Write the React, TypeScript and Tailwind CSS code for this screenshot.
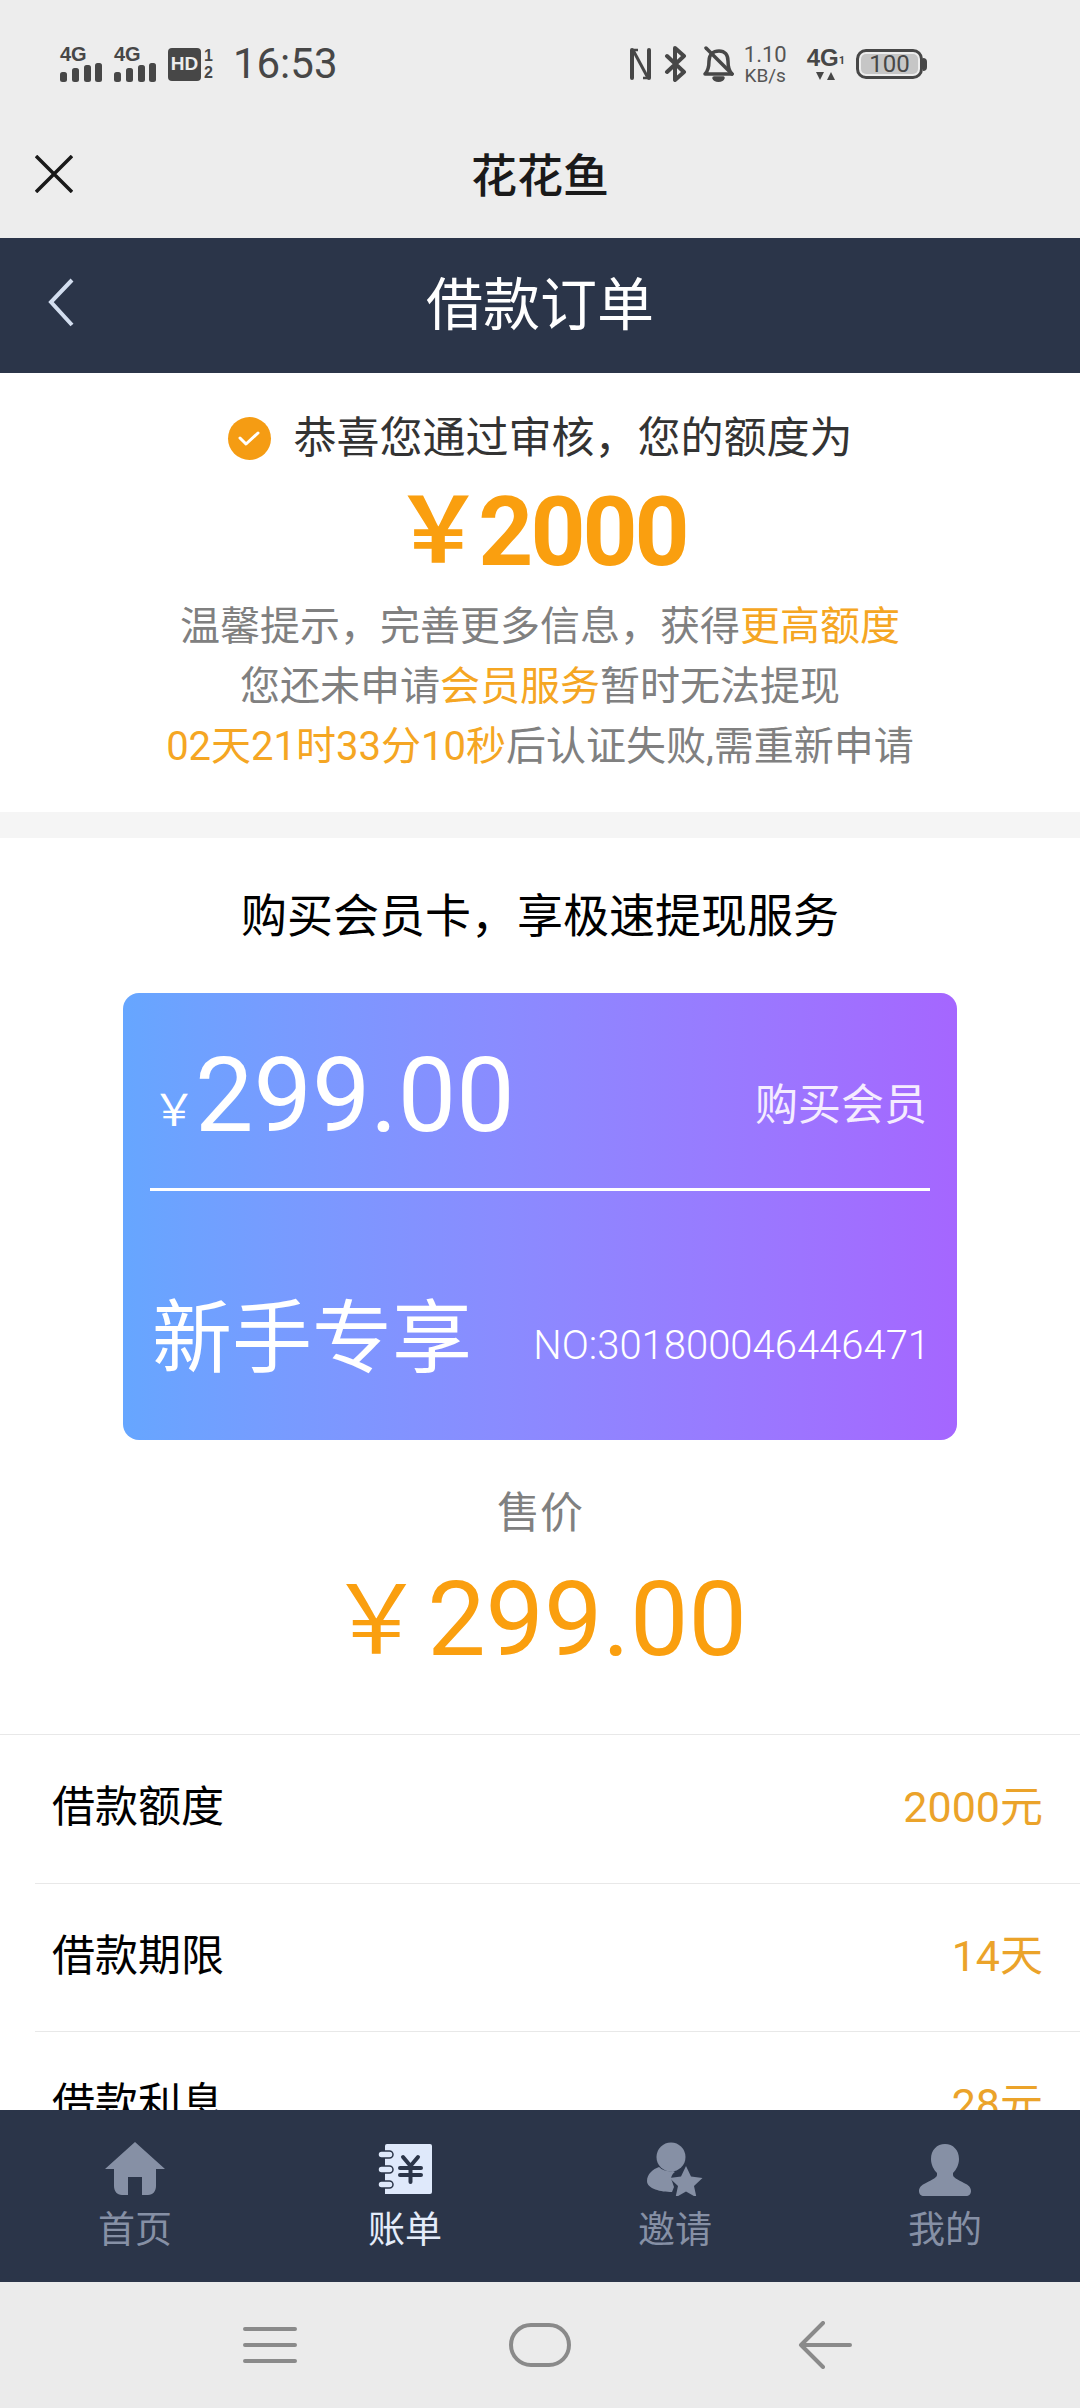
const CJK = "font-['Roboto','Noto_Sans_CJK_SC',sans-serif]";
const COMMA = "\uFF0C";
const YEN = "\uFFE5";

function Signal() {
  return (
    <div className="flex flex-col items-start">
      <span className="text-[20px] leading-[16px] font-bold text-[#474747] font-['Liberation_Sans',sans-serif]">4G</span>
      <svg className="mt-[1px]" width="42" height="19" viewBox="0 0 42 19" fill="#474747">
        <rect x="0" y="9" width="7" height="10" rx="2.500" />
        <rect x="12" y="5" width="7" height="14" rx="2.500" />
        <rect x="24" y="2" width="7" height="17" rx="2.500" />
        <rect x="35" y="0" width="7" height="19" rx="2.500" />
      </svg>
    </div>
  );
}

function StatusBar() {
  return (
    <div className="h-[120px] flex items-center justify-between pl-[60px] pr-[153px] pt-[8px] text-[#474747] font-['Roboto',sans-serif]">
      <div className="flex items-center">
        <div className="flex gap-[12px]">
          <Signal />
          <Signal />
        </div>
        <div className="ml-[12px] w-[33px] h-[33px] rounded-[4px] bg-[#474747] text-[#ededed] text-[19px] font-bold flex items-center justify-center font-['Liberation_Sans',sans-serif]">HD</div>
        <div className="ml-[3px] flex flex-col items-center text-[16px] leading-[17px] font-bold font-['Liberation_Sans',sans-serif]">
          <span>1</span>
          <span>2</span>
        </div>
        <span className="ml-[20px] text-[42px] leading-none">16:53</span>
      </div>
      <div className="flex items-center">
        <svg width="21" height="34" viewBox="0 0 21 34" fill="none" stroke="#474747">
          <path d="M2 3v28" strokeWidth="4" strokeLinecap="round" />
          <path d="M19 3v28" strokeWidth="4" strokeLinecap="round" />
          <path d="M3 3l15 28" strokeWidth="3" />
          <path d="M2 3h6M19 31h-6" strokeWidth="2.500" />
        </svg>
        <svg className="ml-[13px]" width="23" height="36" viewBox="0 0 23 36" fill="none" stroke="#474747" strokeWidth="4" strokeLinecap="round" strokeLinejoin="round">
          <path d="M3 10l17 16-9 8V2l9 8L3 26" />
        </svg>
        <svg className="ml-[16px]" width="31" height="36" viewBox="0 0 31 36" fill="none" stroke="#474747" strokeWidth="3.500" strokeLinecap="round" strokeLinejoin="round">
          <path d="M2 28c3-3 4-6 4-13 0-6 4-10 10-10s9 4 9 10c0 7 1 10 4 13z" />
          <path d="M11 32c1 3 8 3 9 0z" fill="#474747" />
          <path d="M3 2l26 26" />
        </svg>
        <div className="ml-[10px] flex flex-col items-center text-[#555555]">
          <span className="text-[22px] leading-[22px]">1.10</span>
          <span className="text-[19px] leading-[19px]">KB/s</span>
        </div>
        <div className="ml-[20px] flex flex-col items-center">
          <div className="flex items-end">
            <span className="text-[24px] leading-[21px] font-bold font-['Liberation_Sans',sans-serif]">4G</span>
            <span className="text-[11px] leading-[14px] font-bold">1</span>
          </div>
          <svg className="mt-[3px]" width="20" height="10" viewBox="0 0 20 10" fill="#474747">
            <path d="M0 1h8L4 9zM11 9h8l-4-8z" />
          </svg>
        </div>
        <div className="ml-[11px] flex items-center">
          <div className="w-[67px] h-[30px] rounded-[10px] border-[3px] border-[#474747] p-[2px]">
            <div className="h-full rounded-[5px] bg-[#c6c6c6] flex items-center justify-center text-[24px] leading-none text-[#474747]">100</div>
          </div>
          <div className="w-[4px] h-[13px] rounded-r-[4px] bg-[#474747]" />
        </div>
      </div>
    </div>
  );
}

function HomeIcon() {
  return (
    <svg width="60" height="54" viewBox="0 0 60 54" fill="#8690a5">
      <path d="M30 0L60 27H51V44c0 5-3 9-8 9h-6V35H23v18h-6c-5 0-8-4-8-9V27H0z" />
    </svg>
  );
}

function BillIcon() {
  return (
    <svg width="54" height="52" viewBox="0 0 54 52" fill="none">
      <path d="M7 2a2 2 0 0 1 2-2h43a2 2 0 0 1 2 2v46a2 2 0 0 1-2 2H7z" fill="#dfe9fb" />
      <rect x="0" y="7" width="15" height="7" rx="3.500" fill="#dfe9fb" stroke="#2b3549" strokeWidth="1.500" />
      <rect x="0" y="22" width="15" height="7" rx="3.500" fill="#dfe9fb" stroke="#2b3549" strokeWidth="1.500" />
      <rect x="0" y="37" width="15" height="7" rx="3.500" fill="#dfe9fb" stroke="#2b3549" strokeWidth="1.500" />
      <path d="M25 13l7.500 9 7.500-9M22 24h21M22 31h21M32.500 22v16" stroke="#2b3549" strokeWidth="4" strokeLinecap="round" />
    </svg>
  );
}

function InviteIcon() {
  return (
    <svg width="56" height="54" viewBox="0 0 56 54" fill="#8690a5">
      <circle cx="24" cy="15" r="14.500" />
      <path d="M12 25c4 4 10 5 14 4l2 1c-3 2-5 6-3 9l2 6 -2 5C14 50 0 47 0 39c0-7 6-12 12-14z" />
      <path d="M39 24l5 10.500 11.500 1.500-8.500 8 2.500 11.500L39 49.500 28.500 55.500 31 44l-8.500-8L34 34.500z" />
    </svg>
  );
}

function MineIcon() {
  return (
    <svg width="52" height="52" viewBox="0 0 52 52" fill="#8690a5">
      <path d="M26 0c8 0 14 6 14 15 0 6-3 11-6 14v2c0 3 8 6 13 9 4 2 5 5 5 7 0 3-2 5-5 5H5c-3 0-5-2-5-5 0-2 1-5 5-7 5-3 13-6 13-9v-2c-3-3-6-8-6-14C12 6 18 0 26 0z" />
    </svg>
  );
}

function TabItem({ icon, label, active }: { icon: React.ReactNode; label: string; active?: boolean }) {
  return (
    <div className="flex-1 flex flex-col items-center">
      <div className="h-[54px] flex items-end justify-center">{icon}</div>
      <span className={`mt-[14px] text-[37px] leading-[42px] ${active ? "text-[#e4ecfa]" : "text-[#8690a5]"}`}>{label}</span>
    </div>
  );
}

function Row({ label, value, border }: { label: string; value: string; border?: boolean }) {
  return (
    <div className={`ml-[35px] h-[148px] pl-[17px] pr-[37px] pb-[3px] flex items-center justify-between ${border ? "border-t border-[#e8e8e8]" : ""}`}>
      <span className="text-[43px] text-black">{label}</span>
      <span className="text-[43px] text-[#eba32a]">{value}</span>
    </div>
  );
}

export default function App() {
  return (
    <div className={`w-[1080px] h-[2408px] flex flex-col bg-white overflow-hidden ${CJK}`}>
      <div className="bg-[#ededed] shrink-0">
        <StatusBar />
        <div className="h-[118px] flex items-center relative pb-[6px]">
          <svg className="absolute left-[35px] top-[35px]" width="38" height="38" viewBox="0 0 38 38" stroke="#1a1a1a" strokeWidth="3.500">
            <path d="M1 1l36 36M37 1L1 37" />
          </svg>
          <span className="w-full text-center text-[46px] font-medium text-[#1a1a1a]">花花鱼</span>
        </div>
      </div>

      <div className="h-[135px] shrink-0 bg-[#2b3549] flex items-center justify-center relative">
        <svg className="absolute left-[48px] top-[40px]" width="26" height="50" viewBox="0 0 26 50" fill="none" stroke="#d3deef" strokeWidth="4">
          <path d="M24 2L3 24l21 23" />
        </svg>
        <span className="text-[57px] text-white">借款订单</span>
      </div>

      <main className="flex-1 min-h-0 overflow-hidden">
        <section className="h-[439px] flex flex-col items-center">
          <div className="mt-[38px] h-[54px] flex items-center">
            <span className="w-[43px] h-[43px] rounded-full bg-[#f59c13] flex items-center justify-center">
              <svg width="26" height="20" viewBox="0 0 26 20" fill="none" stroke="white" strokeWidth="3" strokeLinecap="round" strokeLinejoin="round">
                <path d="M4 10l6 6L22 5" />
              </svg>
            </span>
            <span className="ml-[23px] text-[43px] leading-[54px] text-[#333333]">恭喜您通过审核{COMMA}您的额度为</span>
          </div>
          <div className="mt-[23px] h-[88px] flex items-center text-[#fa9f0f] font-bold">
            <span className="text-[90px] leading-none font-bold mr-[-5px]">{YEN}</span>
            <span className="text-[96px] leading-none tracking-[-3px]">2000</span>
          </div>
          <div className="mt-[21px] text-[40px] leading-[60px] text-[#808080] text-center">
            <p>温馨提示{COMMA}完善更多信息{COMMA}获得<span className="text-[#f5a623]">更高额度</span></p>
            <p><span>您还未申请</span><span className="text-[#f5a623]">会员服务</span>暂时无法提现</p>
            <p><span className="text-[#f5a623]">02天21时33分10秒</span>后认证失败,需重新申请</p>
          </div>
        </section>

        <div className="h-[26px] bg-[#f5f5f5]" />

        <section className="flex flex-col items-center">
          <h2 className="mt-[48px] text-[46px] leading-[60px] text-black">购买会员卡{COMMA}享极速提现服务</h2>
          <div className="mt-[47px] w-[834px] h-[447px] rounded-[16px] bg-gradient-to-r from-[#66a6ff] to-[#a566ff] text-white px-[27px] flex flex-col">
            <div className="h-[198px] border-b-[3px] border-white flex items-end justify-between pb-[44px] pl-[2px] pr-[3px]">
              <div className="flex items-baseline">
                <span className="text-[44px] leading-none mr-[-1px] -translate-y-[5px]">{YEN}</span>
                <span className="text-[104px] leading-[104px] -mb-[4px]">299.00</span>
              </div>
              <span className="text-[43px] leading-[48px] text-[#f5ecff] mb-[15px]">购买会员</span>
            </div>
            <div className="flex-1 flex items-center justify-between pl-[2px] pt-[46px]">
              <span className="text-[80px] leading-none">新手专享</span>
              <span className="text-[40px] leading-none font-light mt-[14px]">NO:301800046446471</span>
            </div>
          </div>
          <div className="mt-[48px] text-[43px] leading-[50px] text-[#808080]">售价</div>
          <div className="mt-[32px] -ml-[5px] flex items-center text-[#fa9f0f] h-[100px]">
            <span className="text-[96px] leading-none mr-[3px]">{YEN}</span>
            <span className="text-[104px] leading-none">299.00</span>
          </div>
        </section>

        <div className="mt-[64px] border-t border-[#e8e8e8]">
          <Row label="借款额度" value="2000元" />
          <Row label="借款期限" value="14天" border />
          <Row label="借款利息" value="28元" border />
        </div>
      </main>

      <nav className="h-[172px] shrink-0 bg-[#2b3549] flex pt-[32px]">
        <TabItem icon={<HomeIcon />} label="首页" />
        <TabItem icon={<BillIcon />} label="账单" active />
        <TabItem icon={<InviteIcon />} label="邀请" />
        <TabItem icon={<MineIcon />} label="我的" />
      </nav>

      <div className="h-[126px] shrink-0 bg-[#ebebeb] flex items-center relative">
        <svg className="absolute left-[243px] top-[45px]" width="54" height="36" viewBox="0 0 54 36" stroke="#8a8a8a" strokeWidth="4" strokeLinecap="round">
          <path d="M2 2h50M2 18h50M2 34h50" />
        </svg>
        <div className="absolute left-[509px] top-[41px] w-[62px] h-[44px] rounded-[22px] border-[4px] border-[#8a8a8a]" />
        <svg className="absolute left-[798px] top-[39px]" width="54" height="48" viewBox="0 0 54 48" fill="none" stroke="#8a8a8a" strokeWidth="4" strokeLinecap="round" strokeLinejoin="round">
          <path d="M25 2L3 24l22 22M3 24h49" />
        </svg>
      </div>
    </div>
  );
}
